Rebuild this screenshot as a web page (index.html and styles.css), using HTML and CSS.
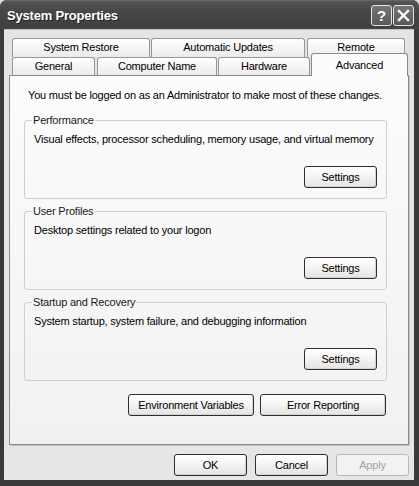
FILE: index.html
```html
<!DOCTYPE html>
<html lang="en">
<head>
<meta charset="utf-8">
<title>System Properties</title>
<link rel="stylesheet" href="styles.css">
</head>
<body>
<div class="window">
  <div class="titlebar">
    <span class="title">System Properties</span>
    <div class="tbtns">
      <div class="tbtn help">?</div>
      <div class="tbtn close">
        <svg width="13" height="13" viewBox="0 0 13 13"><path d="M2 2 L11 11 M11 2 L2 11" stroke="#fff" stroke-width="2.4" stroke-linecap="square"/></svg>
      </div>
    </div>
  </div>
  <div class="client">
    <div class="tabs">
      <div class="tabrow row1">
        <div class="tab t-restore">System Restore</div>
        <div class="tab t-updates">Automatic Updates</div>
        <div class="tab t-remote">Remote</div>
      </div>
      <div class="tabrow row2">
        <div class="tab t-general">General</div>
        <div class="tab t-computer">Computer Name</div>
        <div class="tab t-hardware">Hardware</div>
        <div class="tab t-advanced active">Advanced</div>
      </div>
    </div>
    <div class="panel">
      <p class="note">You must be logged on as an Administrator to make most of these changes.</p>
      <fieldset class="group">
        <legend>Performance</legend>
        <p class="desc">Visual effects, processor scheduling, memory usage, and virtual memory</p>
        <div class="group-actions"><button class="btn btn-settings">Settings</button></div>
      </fieldset>
      <fieldset class="group">
        <legend>User Profiles</legend>
        <p class="desc">Desktop settings related to your logon</p>
        <div class="group-actions"><button class="btn btn-settings">Settings</button></div>
      </fieldset>
      <fieldset class="group">
        <legend>Startup and Recovery</legend>
        <p class="desc">System startup, system failure, and debugging information</p>
        <div class="group-actions"><button class="btn btn-settings">Settings</button></div>
      </fieldset>
      <div class="extra-actions">
        <button class="btn btn-wide">Environment Variables</button>
        <button class="btn btn-wide">Error Reporting</button>
      </div>
    </div>
    <div class="dialog-actions">
      <button class="btn btn-dialog">OK</button>
      <button class="btn btn-dialog">Cancel</button>
      <button class="btn btn-dialog" disabled>Apply</button>
    </div>
  </div>
</div>
</body>
</html>
```

FILE: styles.css
```css
* { box-sizing: border-box; }

body {
  margin: 0;
  background: #dcdcdc;
  font-family: "Liberation Sans", Arial, sans-serif;
  font-size: 11px;
  letter-spacing: -0.2px;
  color: #000;
}

.window {
  width: 419px;
  height: 486px;
  display: flex;
  flex-direction: column;
  background: #3a3a3a;
  border-radius: 7px 7px 0 0;
  overflow: hidden;
}

.titlebar {
  flex: none;
  height: 29px;
  display: flex;
  align-items: center;
  justify-content: space-between;
  padding: 1px 5px 0 7px;
  background: linear-gradient(#6a6a6a 0, #525252 2px, #474747 12px, #404040 27px, #4a4a4a 29px);
}

.title {
  color: #fff;
  font-weight: bold;
  font-size: 13px;
  letter-spacing: -0.2px;
  padding-top: 1px;
  text-shadow: 1px 1px 0 #222;
}

.tbtns {
  display: flex;
}

.tbtn {
  width: 21px;
  height: 21px;
  border: 1px solid #e4e4e4;
  border-radius: 3px;
  background: linear-gradient(#767676, #585858);
  display: flex;
  align-items: center;
  justify-content: center;
  color: #fff;
}

.tbtn + .tbtn { margin-left: 1px; }

.help {
  font-weight: bold;
  font-size: 15px;
  letter-spacing: 0;
}

.client {
  flex: 1;
  display: flex;
  flex-direction: column;
  margin: 0 5px 6px 4px;
  padding: 9px 5px 0 5px;
  background: linear-gradient(#9a9a9a 0, #e4e4e4 1px, #e6e6e6 100%);
}

.tabs {
  display: flex;
  flex-direction: column;
}

.tabrow {
  display: flex;
  align-items: flex-end;
}

.row1 { height: 19px; padding-left: 3px; }
.row2 { height: 18px; padding-left: 3px; }

.tab {
  height: 100%;
  border: 1px solid #979797;
  border-bottom: none;
  border-radius: 3px 3px 0 0;
  background: linear-gradient(#ffffff, #ebebeb);
  text-align: center;
  line-height: 17px;
  white-space: nowrap;
}

.row2 .tab { line-height: 16px; }

.t-restore { width: 138px; }
.t-updates { width: 154px; margin-left: 1px; }
.t-remote { width: 98px; margin-left: 2px; }

.t-general { width: 83px; }
.t-computer { width: 120px; margin-left: 2px; }
.t-hardware { width: 92px; margin-left: 1px; }
.t-advanced { width: 97px; margin-left: 1px; }

.tab.active {
  height: 23px;
  margin-top: -4px;
  margin-bottom: -1px;
  padding-top: 3px;
  position: relative;
  z-index: 1;
  background: #fcfcfc;
  border-color: #8a8a8a;
}

.panel {
  height: 370px;
  border: 1px solid #8c8c8c;
  box-shadow: 1px 1px 0 #c2c2c2;
  background: linear-gradient(#fcfcfc, #f1f1f1);
  padding: 13px 21px 0 14px;
  display: flex;
  flex-direction: column;
}

.note {
  margin: 0 0 0 4px;
  line-height: 13px;
}

.group {
  margin: 12px 0 0;
  padding: 6px 9px 10px 9px;
  border: 1px solid #cfcfcf;
  border-radius: 3px;
  min-width: 0;
}

.group + .group { margin-top: 6px; }

.group legend {
  padding: 0 1px;
  margin-left: -2px;
  line-height: 13px;
  color: #1a1a1a;
}

.desc {
  margin: 0;
  line-height: 13px;
  white-space: nowrap;
}

.group-actions {
  display: flex;
  justify-content: flex-end;
  margin-top: 20px;
}

.btn {
  font-family: inherit;
  font-size: 11px;
  letter-spacing: -0.2px;
  color: #000;
  height: 22px;
  padding: 0;
  border: 1px solid #2f2f2f;
  border-radius: 3px;
  background: linear-gradient(#ffffff 0, #f6f6f6 40%, #e4e4e4 100%);
  box-shadow: inset -1px -1px 0 #d2d2d2;
}

.btn:disabled {
  color: #a2a2a2;
  border-color: #b8b8b8;
  background: #f2f2f2;
  box-shadow: none;
}

.btn-settings { width: 73px; }

.extra-actions {
  display: flex;
  justify-content: flex-end;
  gap: 6px;
  margin-top: 13px;
  padding-right: 1px;
}

.btn-wide { width: 126px; }

.dialog-actions {
  display: flex;
  justify-content: flex-end;
  gap: 8px;
  margin-top: 9px;
}

.btn-dialog { width: 73px; }
```
